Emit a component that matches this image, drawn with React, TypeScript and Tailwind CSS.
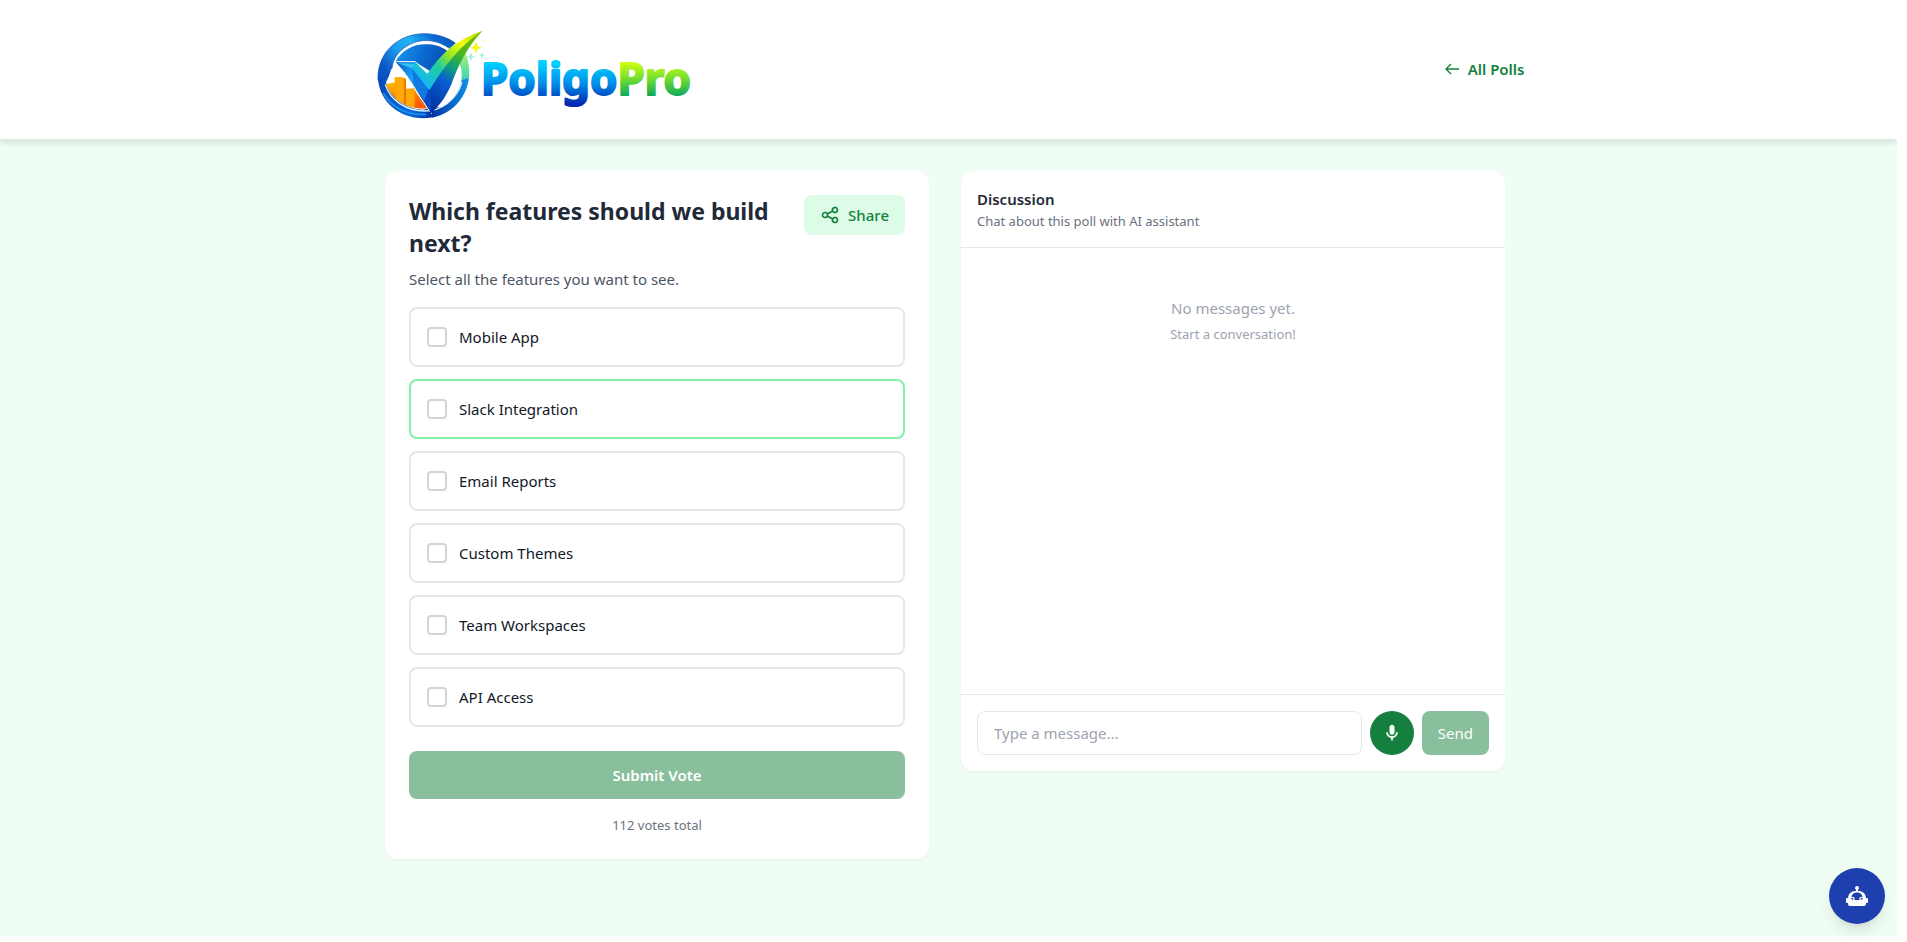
import { useState } from 'react'

const FEATURES = [
  'Mobile App',
  'Slack Integration',
  'Email Reports',
  'Custom Themes',
  'Team Workspaces',
  'API Access',
]

function Logo() {
  return (
    <svg width="320" height="92" viewBox="0 0 320 92" role="img" aria-label="PoligoPro">
      <defs>
        <linearGradient id="ringTop" x1="0" y1="0.6" x2="1" y2="0">
          <stop offset="0" stopColor="#0a55c4" />
          <stop offset="0.3" stopColor="#1c9cf0" />
          <stop offset="0.5" stopColor="#22b4f4" />
          <stop offset="0.75" stopColor="#0a6cd4" />
          <stop offset="1" stopColor="#0a48b0" />
        </linearGradient>
        <linearGradient id="ringBottom" x1="0" y1="0" x2="1" y2="0">
          <stop offset="0" stopColor="#0848b4" />
          <stop offset="0.35" stopColor="#0a6cdc" />
          <stop offset="0.6" stopColor="#0534a0" />
          <stop offset="1" stopColor="#1090e8" />
        </linearGradient>
        <linearGradient id="ringRight" x1="0" y1="0" x2="0" y2="1">
          <stop offset="0" stopColor="#b4f070" />
          <stop offset="0.3" stopColor="#5ce0a0" />
          <stop offset="0.6" stopColor="#28b4e0" />
          <stop offset="1" stopColor="#0858cc" />
        </linearGradient>
        <linearGradient id="inner" x1="0" y1="0" x2="1" y2="0.2">
          <stop offset="0" stopColor="#1c98ec" />
          <stop offset="0.5" stopColor="#0c70d8" />
          <stop offset="1" stopColor="#0a50b4" />
        </linearGradient>
        <linearGradient id="tickLight" gradientUnits="userSpaceOnUse" x1="160" y1="190" x2="335" y2="32">
          <stop offset="0" stopColor="#14b8f4" />
          <stop offset="0.3" stopColor="#22cc9c" />
          <stop offset="0.5" stopColor="#98e820" />
          <stop offset="0.72" stopColor="#f4fc08" />
          <stop offset="1" stopColor="#9cd400" />
        </linearGradient>
        <linearGradient id="tickDark" gradientUnits="userSpaceOnUse" x1="180" y1="260" x2="330" y2="40">
          <stop offset="0" stopColor="#0430a0" />
          <stop offset="0.35" stopColor="#0a60d0" />
          <stop offset="0.52" stopColor="#10a078" />
          <stop offset="0.7" stopColor="#48b820" />
          <stop offset="1" stopColor="#78b800" />
        </linearGradient>
        <linearGradient id="tickLeft" x1="0" y1="0" x2="1" y2="1">
          <stop offset="0" stopColor="#0858c4" />
          <stop offset="0.4" stopColor="#18a4f4" />
          <stop offset="1" stopColor="#0438ac" />
        </linearGradient>
        <linearGradient id="bars" x1="0" y1="0" x2="0.3" y2="1">
          <stop offset="0" stopColor="#ffc808" />
          <stop offset="0.5" stopColor="#ff9800" />
          <stop offset="1" stopColor="#ff5c08" />
        </linearGradient>
        <linearGradient id="blueText" gradientUnits="userSpaceOnUse" x1="0" y1="34" x2="0" y2="76">
          <stop offset="0" stopColor="#00d4ff" />
          <stop offset="0.5" stopColor="#0090e8" />
          <stop offset="1" stopColor="#0028b0" />
        </linearGradient>
        <linearGradient id="greenText" gradientUnits="userSpaceOnUse" x1="0" y1="34" x2="0" y2="68">
          <stop offset="0" stopColor="#d4ff10" />
          <stop offset="0.5" stopColor="#70dc30" />
          <stop offset="1" stopColor="#10a85c" />
        </linearGradient>
      </defs>
      <g transform="translate(-7 -7) scale(0.3333)">
        <ellipse cx="162" cy="165" rx="136" ry="126" fill="#fff" />
        {/* ring */}
        <path d="M284 92C318 160 292 262 186 290L184 276C262 254 296 174 262 112Z" fill="url(#ringRight)" />
        <path d="M24 178C20 96 84 38 164 38C200 38 234 50 256 66L238 82C206 60 178 56 150 60C106 68 70 100 66 142Z" fill="url(#ringTop)" stroke="#0848a8" strokeWidth="2" />
        <path d="M76 122C96 84 138 66 176 70C200 72 216 78 232 90L180 150L134 122Z" fill="url(#inner)" />
        <path d="M24 176L64 144C60 156 56 170 48 184C58 228 106 266 160 266L180 262L214 258C246 244 264 214 278 176L296 172C288 240 234 292 160 292C86 290 32 244 24 176Z" fill="url(#ringBottom)" />
        <path d="M46 190C60 238 108 270 164 270C214 270 260 236 276 184" fill="none" stroke="#dff4ff" strokeWidth="4" />
        <path d="M40 216C66 262 112 282 168 280" fill="none" stroke="#1890f0" strokeWidth="5" />
        {/* bar chart */}
        <path d="M48 190L74 184V168L102 170V204L132 202L140 216L172 262C118 268 66 240 48 190Z" fill="url(#bars)" />
        <path d="M76 168L102 170V248L78 236ZM108 204L134 206V262L108 252Z" fill="#ffa808" />
        <path d="M102 170L108 174V250L102 247Z" fill="#e87c00" />
        {/* check mark */}
        <path d="M74 122L136 122L176 164L184 278Q154 236 122 182Q104 152 74 122Z" fill="url(#tickLeft)" stroke="#fff" strokeWidth="3" />
        <path d="M82 126L132 128L176 176L178 190L126 142Z" fill="#35c0f8" />
        <path d="M126 142L178 190L184 272L132 190Z" fill="#1078e0" />
        <path d="M338 29C290 80 268 128 250 174C236 216 212 252 180 280L172 196C208 140 268 70 338 29Z" fill="url(#tickDark)" />
        <path d="M134 122L172 158C212 98 262 54 338 29C270 74 226 130 178 208L126 142Z" fill="url(#tickLight)" />
        <path d="M176 206C184 228 186 248 182 274L162 240Z" fill="#0848c0" />
        {/* sparkles */}
        <path d="M318 61L323 75L336 80L323 85L318 98L313 85L300 80L313 75Z" fill="#f0f820" />
        <path d="M303 93L306 104L315 107L306 110L303 121L299 110L290 107L299 104ZM336 94L339 101L345 103L339 106L336 112L333 106L327 103L333 101Z" fill="#9cf0dc" />
        <circle cx="342" cy="60" r="2" fill="#d8f080" />
      </g>
      <g
        fontFamily="'Noto Sans', 'Open Sans', sans-serif"
        fontWeight="700"
        fontSize="44"
        strokeWidth="2"
        strokeLinejoin="round"
      >
        <text x="104" y="67" fill="url(#blueText)" stroke="url(#blueText)">
          Poligo
          <tspan fill="url(#greenText)" stroke="url(#greenText)">Pro</tspan>
        </text>
      </g>
    </svg>
  )
}

function Header() {
  return (
    <header className="relative bg-white shadow-[0_4px_6px_rgba(0,0,0,0.1)]">
      <div className="mx-auto flex h-[139px] max-w-6xl items-center justify-between">
        <a href="#home" className="ml-1 mt-2">
          <Logo />
        </a>
        <a href="#polls" className="mb-0.5 flex items-center gap-2 font-semibold text-[#15803d]">
          <svg width="16" height="16" viewBox="0 0 16 16" fill="none" stroke="currentColor" strokeWidth="1.4" aria-hidden="true">
            <path d="M15 8H2M7 3L2 8L7 13" />
          </svg>
          All Polls
        </a>
      </div>
    </header>
  )
}

function Poll() {
  const [selected, setSelected] = useState<string[]>([])

  const toggle = (name: string) =>
    setSelected((prev) => (prev.includes(name) ? prev.filter((n) => n !== name) : [...prev, name]))

  return (
    <section className="rounded-xl bg-white p-6 shadow-xs" aria-labelledby="poll-heading">
      <div className="flex items-start justify-between gap-4">
        <h1 id="poll-heading" className="text-[23px]/8 font-bold text-[#1f2937]">
          Which features should we build next?
        </h1>
        <button
          type="button"
          className="flex h-10 shrink-0 items-center gap-2 rounded-lg bg-[#dcfce7] px-4 font-medium text-[#15803d]"
        >
          <svg width="20" height="20" viewBox="0 0 24 24" fill="none" stroke="currentColor" strokeWidth="2" aria-hidden="true">
            <path d="M8.684 13.342C8.886 12.938 9 12.482 9 12c0-.482-.114-.938-.316-1.342m0 2.684a3 3 0 110-2.684m0 2.684l6.632 3.316m-6.632-6l6.632-3.316m0 0a3 3 0 105.367-2.684 3 3 0 00-5.367 2.684zm0 9.316a3 3 0 105.368 2.684 3 3 0 00-5.368-2.684z" />
          </svg>
          Share
        </button>
      </div>
      <p className="mt-2 text-[#4b5563]">Select all the features you want to see.</p>
      <div className="mt-4 space-y-3">
        {FEATURES.map((name) => (
          <label
            key={name}
            className={`flex h-15 cursor-pointer items-center gap-3 rounded-lg border-2 px-4 text-[#111827] ${
              name === 'Slack Integration' ? 'border-[#86efac]' : 'border-[#e5e7eb]'
            }`}
          >
            <input
              type="checkbox"
              checked={selected.includes(name)}
              onChange={() => toggle(name)}
              className="size-5 appearance-none rounded-sm border-2 border-[#d1d5db] checked:border-[#15803d] checked:bg-[#15803d]"
            />
            {name}
          </label>
        ))}
      </div>
      <button type="button" className="mt-6 h-12 w-full rounded-lg bg-[#15803d] font-semibold text-white opacity-50">
        Submit Vote
      </button>
      <p className="mt-4 text-center text-[13px]/5 text-[#6b7280]">112 votes total</p>
    </section>
  )
}

function Discussion() {
  return (
    <section className="flex h-[600px] flex-col rounded-xl bg-white shadow-xs" aria-labelledby="chat-heading">
      <div className="border-b border-[#e5e7eb] p-4">
        <h2 id="chat-heading" className="font-semibold text-[#1f2937]">
          Discussion
        </h2>
        <p className="text-[13px]/5 text-[#6b7280]">Chat about this poll with AI assistant</p>
      </div>
      <div className="flex-1 px-4 py-12 text-center text-[#9ca3af]">
        <p>No messages yet.</p>
        <p className="mt-1 text-[13px]/5">Start a conversation!</p>
      </div>
      <form className="flex gap-2 border-t border-[#e5e7eb] p-4" onSubmit={(e) => e.preventDefault()}>
        <input
          type="text"
          aria-label="Message"
          placeholder="Type a message..."
          className="h-11 min-w-0 flex-1 rounded-lg border border-[#e5e7eb] px-4 placeholder:text-[#9ca3af]"
        />
        <button
          type="button"
          aria-label="Record voice"
          className="flex size-11 items-center justify-center rounded-full bg-[#15803d] text-white"
        >
          <svg width="20" height="20" viewBox="0 0 24 24" fill="currentColor" aria-hidden="true">
            <path d="M12 14c1.66 0 3-1.34 3-3V5c0-1.66-1.34-3-3-3S9 3.34 9 5v6c0 1.66 1.34 3 3 3z" />
            <path d="M17 11c0 2.76-2.24 5-5 5s-5-2.24-5-5H5c0 3.53 2.61 6.43 6 6.92V21h2v-3.08c3.39-.49 6-3.39 6-6.92h-2z" />
          </svg>
        </button>
        <button type="submit" className="h-11 rounded-lg bg-[#15803d] px-4 text-white opacity-50">
          Send
        </button>
      </form>
    </section>
  )
}

function AssistantButton() {
  return (
    <button
      type="button"
      aria-label="Open assistant"
      className="fixed right-[22px] bottom-[18px] flex size-14 items-center justify-center rounded-full bg-[#1e40af] text-white shadow-lg"
    >
      <svg width="24" height="24" viewBox="0 0 24 24" fill="currentColor" aria-hidden="true">
        <path d="M12 2a2 2 0 0 1 2 2c0 .74-.4 1.39-1 1.73V7h1a7 7 0 0 1 7 7h1a1 1 0 0 1 1 1v3a1 1 0 0 1-1 1h-1v1a2 2 0 0 1-2 2H5a2 2 0 0 1-2-2v-1H2a1 1 0 0 1-1-1v-3a1 1 0 0 1 1-1h1a7 7 0 0 1 7-7h1V5.730c-.6-.34-1-.99-1-1.730a2 2 0 0 1 2-2z" />
        <path d="M12 8.500c3 0 5.300 2 5.500 4.500 0 2-1 3-2.200 3H8.700c-1.200 0-2.200-1-2.200-3 .2-2.500 2.500-4.500 5.500-4.500z" fill="#1e40af" />
        <circle cx="7.700" cy="14.700" r="2" />
        <circle cx="16.300" cy="14.700" r="2" />
        <circle cx="7.400" cy="14.700" r="1" fill="#1e40af" />
        <circle cx="16.600" cy="14.700" r="1" fill="#1e40af" />
      </svg>
    </button>
  )
}

export default function App() {
  return (
    <div className="flex min-h-screen flex-col bg-white pr-[10px] pb-[6px] font-['Noto_Sans','Open_Sans',sans-serif] text-[15px]/6">
      <div className="flex-1 overflow-x-clip bg-[#f0fdf4]">
        <Header />
        <div className="pr-[7px]">
          <main className="mx-auto grid max-w-6xl grid-cols-2 items-start gap-8 px-4 py-8">
            <Poll />
            <Discussion />
          </main>
        </div>
      </div>
      <AssistantButton />
    </div>
  )
}
